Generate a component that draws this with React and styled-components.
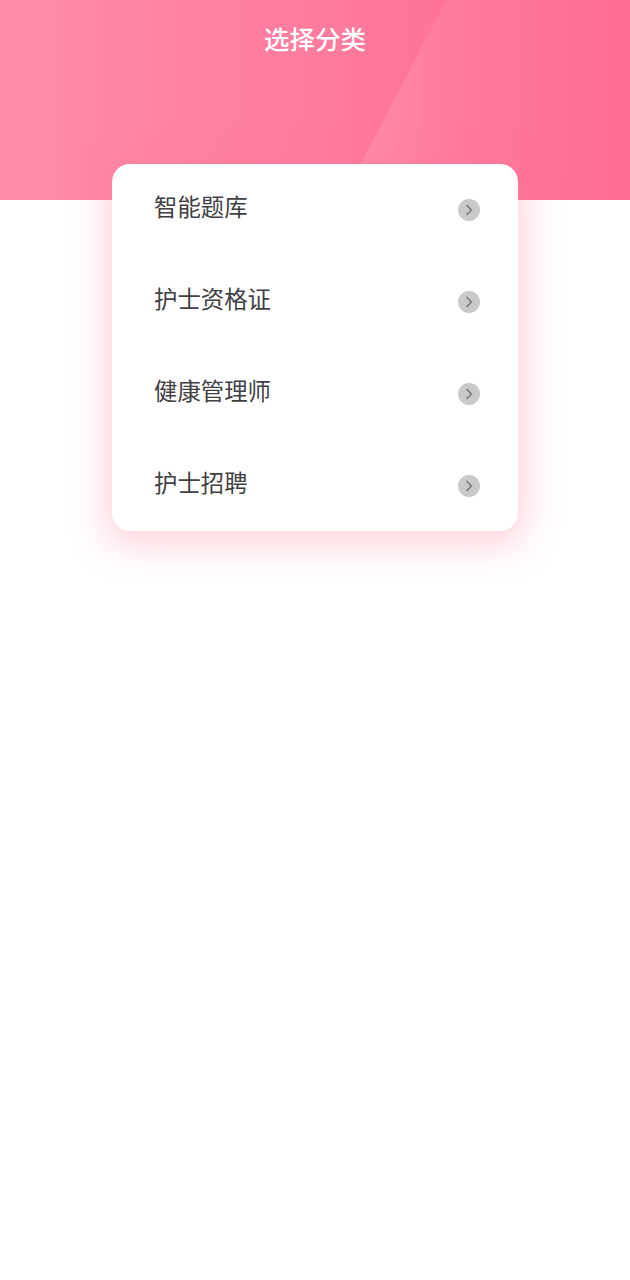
import React from "react";
import styled, { createGlobalStyle } from "styled-components";

const Global = createGlobalStyle`
  html, body { margin: 0; padding: 0; background: #fff; }
  body { font-family: "Noto Sans CJK SC", "Noto Sans", sans-serif; }
`;

const Page = styled.div`
  width: 630px;
  min-height: 1280px;
  background: #fff;
  overflow: hidden;
`;

const Header = styled.header`
  position: relative;
  height: 200px;
  box-sizing: border-box;
  padding-top: 19px;
  text-align: center;
  background: linear-gradient(90deg, #ff8eaa 0%, #ff82a2 30%, #ff7a9c 55%, #ff7298 72%, #ff7097 100%);
  &::before {
    content: "";
    position: absolute;
    inset: 0;
    clip-path: polygon(446px 0, 630px 0, 630px 200px, 342px 200px);
    background: linear-gradient(90deg, #ff8eaa 55%, #ff7c9e 70%, #ff7499 85%, #ff6c92 100%);
  }
`;

const Title = styled.h1`
  position: relative;
  margin: 0;
  font-size: 25.5px;
  line-height: 38px;
  font-weight: 500;
  color: #fff;
`;

const Card = styled.ul`
  position: relative;
  list-style: none;
  box-sizing: border-box;
  width: 406px;
  height: 367px;
  margin: -36px 0 0 112px;
  padding: 0;
  background: #fff;
  border-radius: 18px;
  box-shadow: 0 8px 36px 6px rgba(255, 120, 150, 0.34);
`;

const Row = styled.li`
  display: flex;
  align-items: center;
  justify-content: space-between;
  height: 92px;
  padding: 0 38px 0 42px;
`;

const Label = styled.span`
  font-size: 23.4px;
  line-height: 32px;
  margin-bottom: 9px;
  color: #3f3f44;
`;

const Arrow = styled.span`
  display: flex;
  align-items: center;
  justify-content: center;
  width: 22px;
  height: 22px;
  margin-bottom: 1px;
  border-radius: 50%;
  background: #c9c9c9;
`;

const items = ["智能题库", "护士资格证", "健康管理师", "护士招聘"];

export default function App() {
  return (
    <Page>
      <Global />
      <Header>
        <Title>选择分类</Title>
      </Header>
      <Card>
        {items.map((t) => (
          <Row key={t}>
            <Label>{t}</Label>
            <Arrow>
              <svg width="22" height="22" viewBox="0 0 22 22" fill="none">
                <path d="M8.5 6 L13.5 11 L8.5 16" stroke="#666" strokeWidth="1.1" />
              </svg>
            </Arrow>
          </Row>
        ))}
      </Card>
    </Page>
  );
}
